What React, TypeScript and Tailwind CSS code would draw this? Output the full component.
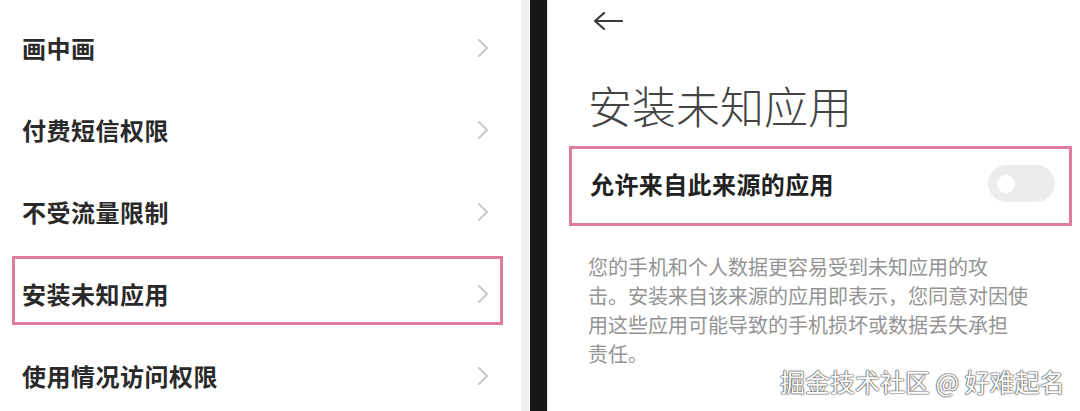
const cjk = { fontFamily: '"Noto Sans CJK SC", "Noto Sans", sans-serif' };

const rows = ["画中画", "付费短信权限", "不受流量限制", "安装未知应用", "使用情况访问权限"];

function Chevron() {
  return (
    <svg width="12" height="20" viewBox="0 0 12 20" fill="none">
      <path d="M2 2 L10 10 L2 18" stroke="#c6c6c6" strokeWidth="1.8" strokeLinecap="round" strokeLinejoin="round" />
    </svg>
  );
}

function BackArrow() {
  return (
    <svg width="30" height="20" viewBox="0 0 30 20" fill="none">
      <path d="M2 10 H29 M11 2 L2 10 L11 18" stroke="#3a3a3a" strokeWidth="2.2" strokeLinecap="round" strokeLinejoin="round" />
    </svg>
  );
}

export default function App() {
  return (
    <div className="relative flex h-[411px] w-[1080px] overflow-hidden bg-white" style={cjk}>
      {/* settings list */}
      <div className="w-[521px] shrink-0 pt-[8px]">
        {rows.map((label, i) => (
          <div key={label} className="h-[82px] pt-[2px]">
            <div
              className={
                "ml-[12px] flex h-[69px] w-[491px] items-center justify-between border-[3px] pl-[7px] pr-[11px] pt-[6px] " +
                (i === 3 ? "border-[#e07c9e]" : "border-transparent")
              }
            >
              <span className="text-[24px] font-bold leading-none tracking-[0.5px] text-[#2a2a2a]">{label}</span>
              <Chevron />
            </div>
          </div>
        ))}
      </div>

      {/* divider between the two screenshots */}
      <div className="w-[9px] shrink-0 bg-[#f1f1f1]" />
      <div className="w-[17px] shrink-0 bg-[#171717]" />

      {/* detail page */}
      <div className="flex-1 border-l border-[#e4e4e4] pt-[11px]">
        <div className="ml-[45px]">
          <BackArrow />
        </div>
        <h1 className="ml-[40px] mt-[52px] text-[44px] font-light leading-[44px] text-[#444]">安装未知应用</h1>
        <div className="ml-[21px] mt-[19px] flex h-[80px] w-[503px] items-center justify-between border-[3px] border-[#e07c9e] pb-[5px] pl-[18px] pr-[14px]">
          <span className="text-[24px] font-bold leading-none tracking-[0.4px] text-[#222]">允许来自此来源的应用</span>
          <div className="flex h-[37px] w-[67px] items-center rounded-full bg-[#ececec] pl-[9px]">
            <div className="h-[18px] w-[18px] rounded-full bg-white" />
          </div>
        </div>
        <p className="ml-[40px] mt-[26px] text-[20px] leading-[29px] text-[#949494]">
          您的手机和个人数据更容易受到未知应用的攻
          <br />
          击。安装来自该来源的应用即表示，您同意对因使
          <br />
          用这些应用可能导致的手机损坏或数据丢失承担
          <br />
          责任。
        </p>
      </div>

      {/* watermark */}
      <div
        className="absolute left-[780px] top-[365px] text-[25px] leading-[32px] text-white"
        style={{ textShadow: "0 0 2px #444, 0 0 1px #444, 0 0 1px #444" }}
      >
        掘金技术社区 @ 好难起名
      </div>
    </div>
  );
}
